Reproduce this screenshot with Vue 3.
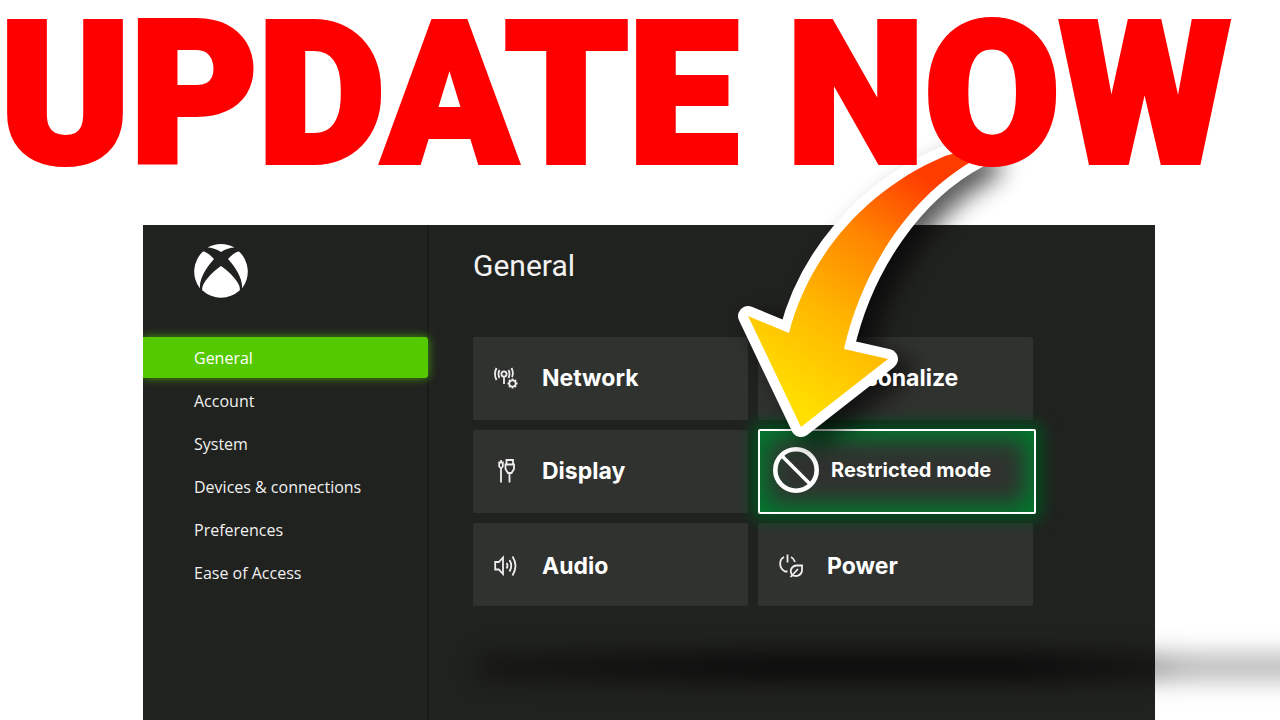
<script setup>
const menu = ['General', 'Account', 'System', 'Devices & connections', 'Preferences', 'Ease of Access']
const tiles = [
  { id: 'network', label: 'Network' },
  { id: 'personalize', label: 'Personalize' },
  { id: 'display', label: 'Display' },
  { id: 'restricted', label: 'Restricted mode' },
  { id: 'audio', label: 'Audio' },
  { id: 'power', label: 'Power' },
]
const arrowPath = 'M748 316L789 333C807 262 860 192 945 156L962 151L978 158C914 192 863 265 844 349L888 359L801 427Z'
</script>

<template>
  <div class="page">
    <h1 class="headline">UPDATE NOW</h1>
    <div class="panel">
      <aside class="sidebar">
        <svg class="logo" viewBox="0 0 56 56" role="img" aria-label="Xbox">
          <path d="M14.500 4.500A27.500 27.500 0 0 1 41.500 4.500Q35 4.500 28 9Q21 4.500 14.500 4.500Z" />
          <path d="M10 8.500Q14 8.500 21 16C13 25 6 36 7 45.500A27.500 27.500 0 0 1 10 8.500Z" />
          <path d="M46 8.500Q42 8.500 35 16C43 25 50 36 49 45.500A27.500 27.500 0 0 0 46 8.500Z" />
          <path d="M28 23C18 30 7 42 9.500 47.500A27.500 27.500 0 0 0 46.500 47.500C49 42 38 30 28 23Z" />
        </svg>
        <nav class="menu">
          <a v-for="(item, i) in menu" :key="item" href="#" class="item" :class="{ active: i === 0 }">{{ item }}</a>
        </nav>
      </aside>

      <main class="content">
        <h2 class="title">General</h2>
        <div class="tiles">
          <button v-for="t in tiles" :key="t.id" type="button" class="tile" :class="t.id">
            <svg v-if="t.id === 'network'" class="icon" viewBox="0 0 24 24">
              <circle cx="10" cy="8" r="2.600" />
              <path d="M10 10.600V18M5.500 4Q3.500 8 5.500 12M2.500 2Q-.5 8 2.500 14M14.500 4Q16.500 8 14.500 12M17.500 2Q20 7 18 11" />
              <circle cx="18.500" cy="17.500" r="3.200" />
              <path d="M18.500 12.500v2M18.500 20.500v2M13.500 17.500h2M21.500 17.500h2M15 14l1.300 1.300M20.700 19.700L22 21M15 21l1.300-1.300M20.700 15.300L22 14" />
            </svg>
            <svg v-else-if="t.id === 'display'" class="icon" viewBox="0 0 24 24">
              <path d="M7 9V23.500M5.200 3.500h3.600v4L7 9.500L5.200 7.500ZM7 3.500V1M15.500 14.500V23.500M12.500 5V1h6.500V5M11.500 5.500h8.500V10l-2.500 4h-3.500L11.500 10Z" />
            </svg>
            <svg v-else-if="t.id === 'audio'" class="icon" viewBox="0 0 24 24">
              <path d="M1.200 8h3.600L9 3.500v16.500L4.800 15.500H1.200ZM12.500 9Q14.500 11.700 12.500 14.500M15.500 6Q19 11.700 15.500 17.500M18.500 2.500Q24.500 11.700 18.500 21.500" />
            </svg>
            <svg v-else-if="t.id === 'power'" class="icon" viewBox="0 0 24 24">
              <path d="M8.500 .5V8.500M5 3C-.5 6 0 14.500 6 17.500H8.500M12 3Q15 4.500 16 8M11.500 23l7.500-8M13 21C10.500 17 12 12.500 17 11.500H23V17C22 22 17 23 13 21Z" />
            </svg>
            <svg v-else-if="t.id === 'restricted'" class="ban" viewBox="0 0 46 46">
              <circle cx="23" cy="23" r="20.700" stroke-width="4.600" />
              <path d="M9 9L37 37" stroke-width="3.500" />
            </svg>
            <svg v-else class="icon" viewBox="0 0 24 24">
              <path d="M3 21L14 10M12 8l4 4L22 4L20 2Z" />
            </svg>
            <span class="label">{{ t.label }}</span>
          </button>
        </div>
      </main>

      <div class="shade"></div>
      <svg class="arrow cast" viewBox="720 130 320 340" aria-hidden="true">
        <path :d="arrowPath" />
      </svg>
      <svg class="arrow" viewBox="720 130 320 340" aria-hidden="true">
        <defs>
          <linearGradient id="heat" gradientUnits="userSpaceOnUse" x1="790" y1="400" x2="930" y2="180">
            <stop offset="0" stop-color="#ffde00" />
            <stop offset=".35" stop-color="#ffb800" />
            <stop offset=".68" stop-color="#ff8600" />
            <stop offset="1" stop-color="#ff3c00" />
          </linearGradient>
        </defs>
        <path class="rim" :d="arrowPath" />
        <path :d="arrowPath" fill="url(#heat)" />
      </svg>
    </div>
  </div>
</template>

<style>
body {
  margin: 0;
  background: #fff;
}
</style>

<style scoped>
.page {
  display: flex;
  flex-direction: column;
  min-height: 100vh;
  overflow: hidden;
  background: #fff;
}
.headline {
  position: relative;
  z-index: 3;
  box-sizing: border-box;
  height: 225px;
  margin: 0;
  font: 900 196px/190px Roboto, "Liberation Sans", sans-serif;
  color: #f00;
  -webkit-text-stroke: 6px #f00;
  white-space: nowrap;
}
.panel {
  position: relative;
  flex: 1;
  display: flex;
  margin: 0 125px 0 143px;
  background: #20221f;
}
.sidebar {
  flex: 0 0 284px;
  border-right: 2px solid #191b18;
}
.logo {
  display: block;
  width: 56px;
  height: 56px;
  margin: 18px 0 38px 50px;
  fill: #fff;
}
.menu {
  display: flex;
  flex-direction: column;
  gap: 2px;
}
.item {
  padding: 1px 0 0 51px;
  font: 400 16px/40px "Open Sans", "Noto Sans", sans-serif;
  color: #f0f0f0;
  text-decoration: none;
}
.item.active {
  margin-right: -1px;
  border-radius: 0 3px 3px 0;
  background: #55c900;
  color: #fff;
  box-shadow: 0 0 10px #4a9c10;
  clip-path: inset(-12px -12px -12px 0);
}
.content {
  flex: 1;
  min-width: 0;
  padding: 0 122px 0 44px;
}
.title {
  margin: 19px 0 49px;
  font: 400 30px/44px Roboto, sans-serif;
  color: #f2f2f2;
}
.tiles {
  display: grid;
  grid-template-columns: 1fr 1fr;
  grid-auto-rows: 83px;
  gap: 10px;
}
.tile {
  display: flex;
  align-items: center;
  gap: 24px;
  min-width: 0;
  padding: 0 0 0 21px;
  border: 0;
  border-radius: 2px;
  background: #30322f;
  color: #fff;
  font: 700 23px/32px Inter, sans-serif;
  text-align: left;
  white-space: nowrap;
}
.label {
  position: relative;
  z-index: 2;
}
.tile.network,
.tile.personalize,
.tile.display {
  padding-bottom: 2px;
}
.tile.audio,
.tile.power {
  padding-top: 2px;
}
.icon {
  flex: none;
  width: 24px;
  height: 24px;
  fill: none;
  stroke: #eee;
  stroke-width: 1.8;
}
.tile.restricted {
  position: relative;
  z-index: 1;
  gap: 12px;
  margin: -1px -3px -1px 0;
  padding: 0 0 4px 13px;
  border: 2px solid #fff;
  font-size: 20px;
  box-shadow: 0 0 16px 6px #00501f, inset 0 0 24px 8px #007a2e;
}
.ban {
  flex: none;
  width: 46px;
  height: 46px;
  fill: none;
  stroke: #fff;
}
.shade {
  position: absolute;
  left: 335px;
  right: -160px;
  top: 430px;
  height: 24px;
  background: linear-gradient(90deg, rgba(0, 0, 0, .35), rgba(0, 0, 0, .75) 35%, rgba(0, 0, 0, .75) 65%, rgba(0, 0, 0, .3) 85%);
  filter: blur(12px);
}
.arrow {
  position: absolute;
  z-index: 2;
  left: 577px;
  top: -95px;
  width: 320px;
  height: 340px;
  overflow: visible;
}
.cast {
  z-index: 1;
  margin: 10px 0 0 14px;
  stroke: #000;
  stroke-width: 20;
  stroke-linejoin: round;
  opacity: .65;
  filter: blur(12px);
}
.rim {
  fill: #fff;
  stroke: #fff;
  stroke-width: 20;
  stroke-linejoin: round;
}
</style>
